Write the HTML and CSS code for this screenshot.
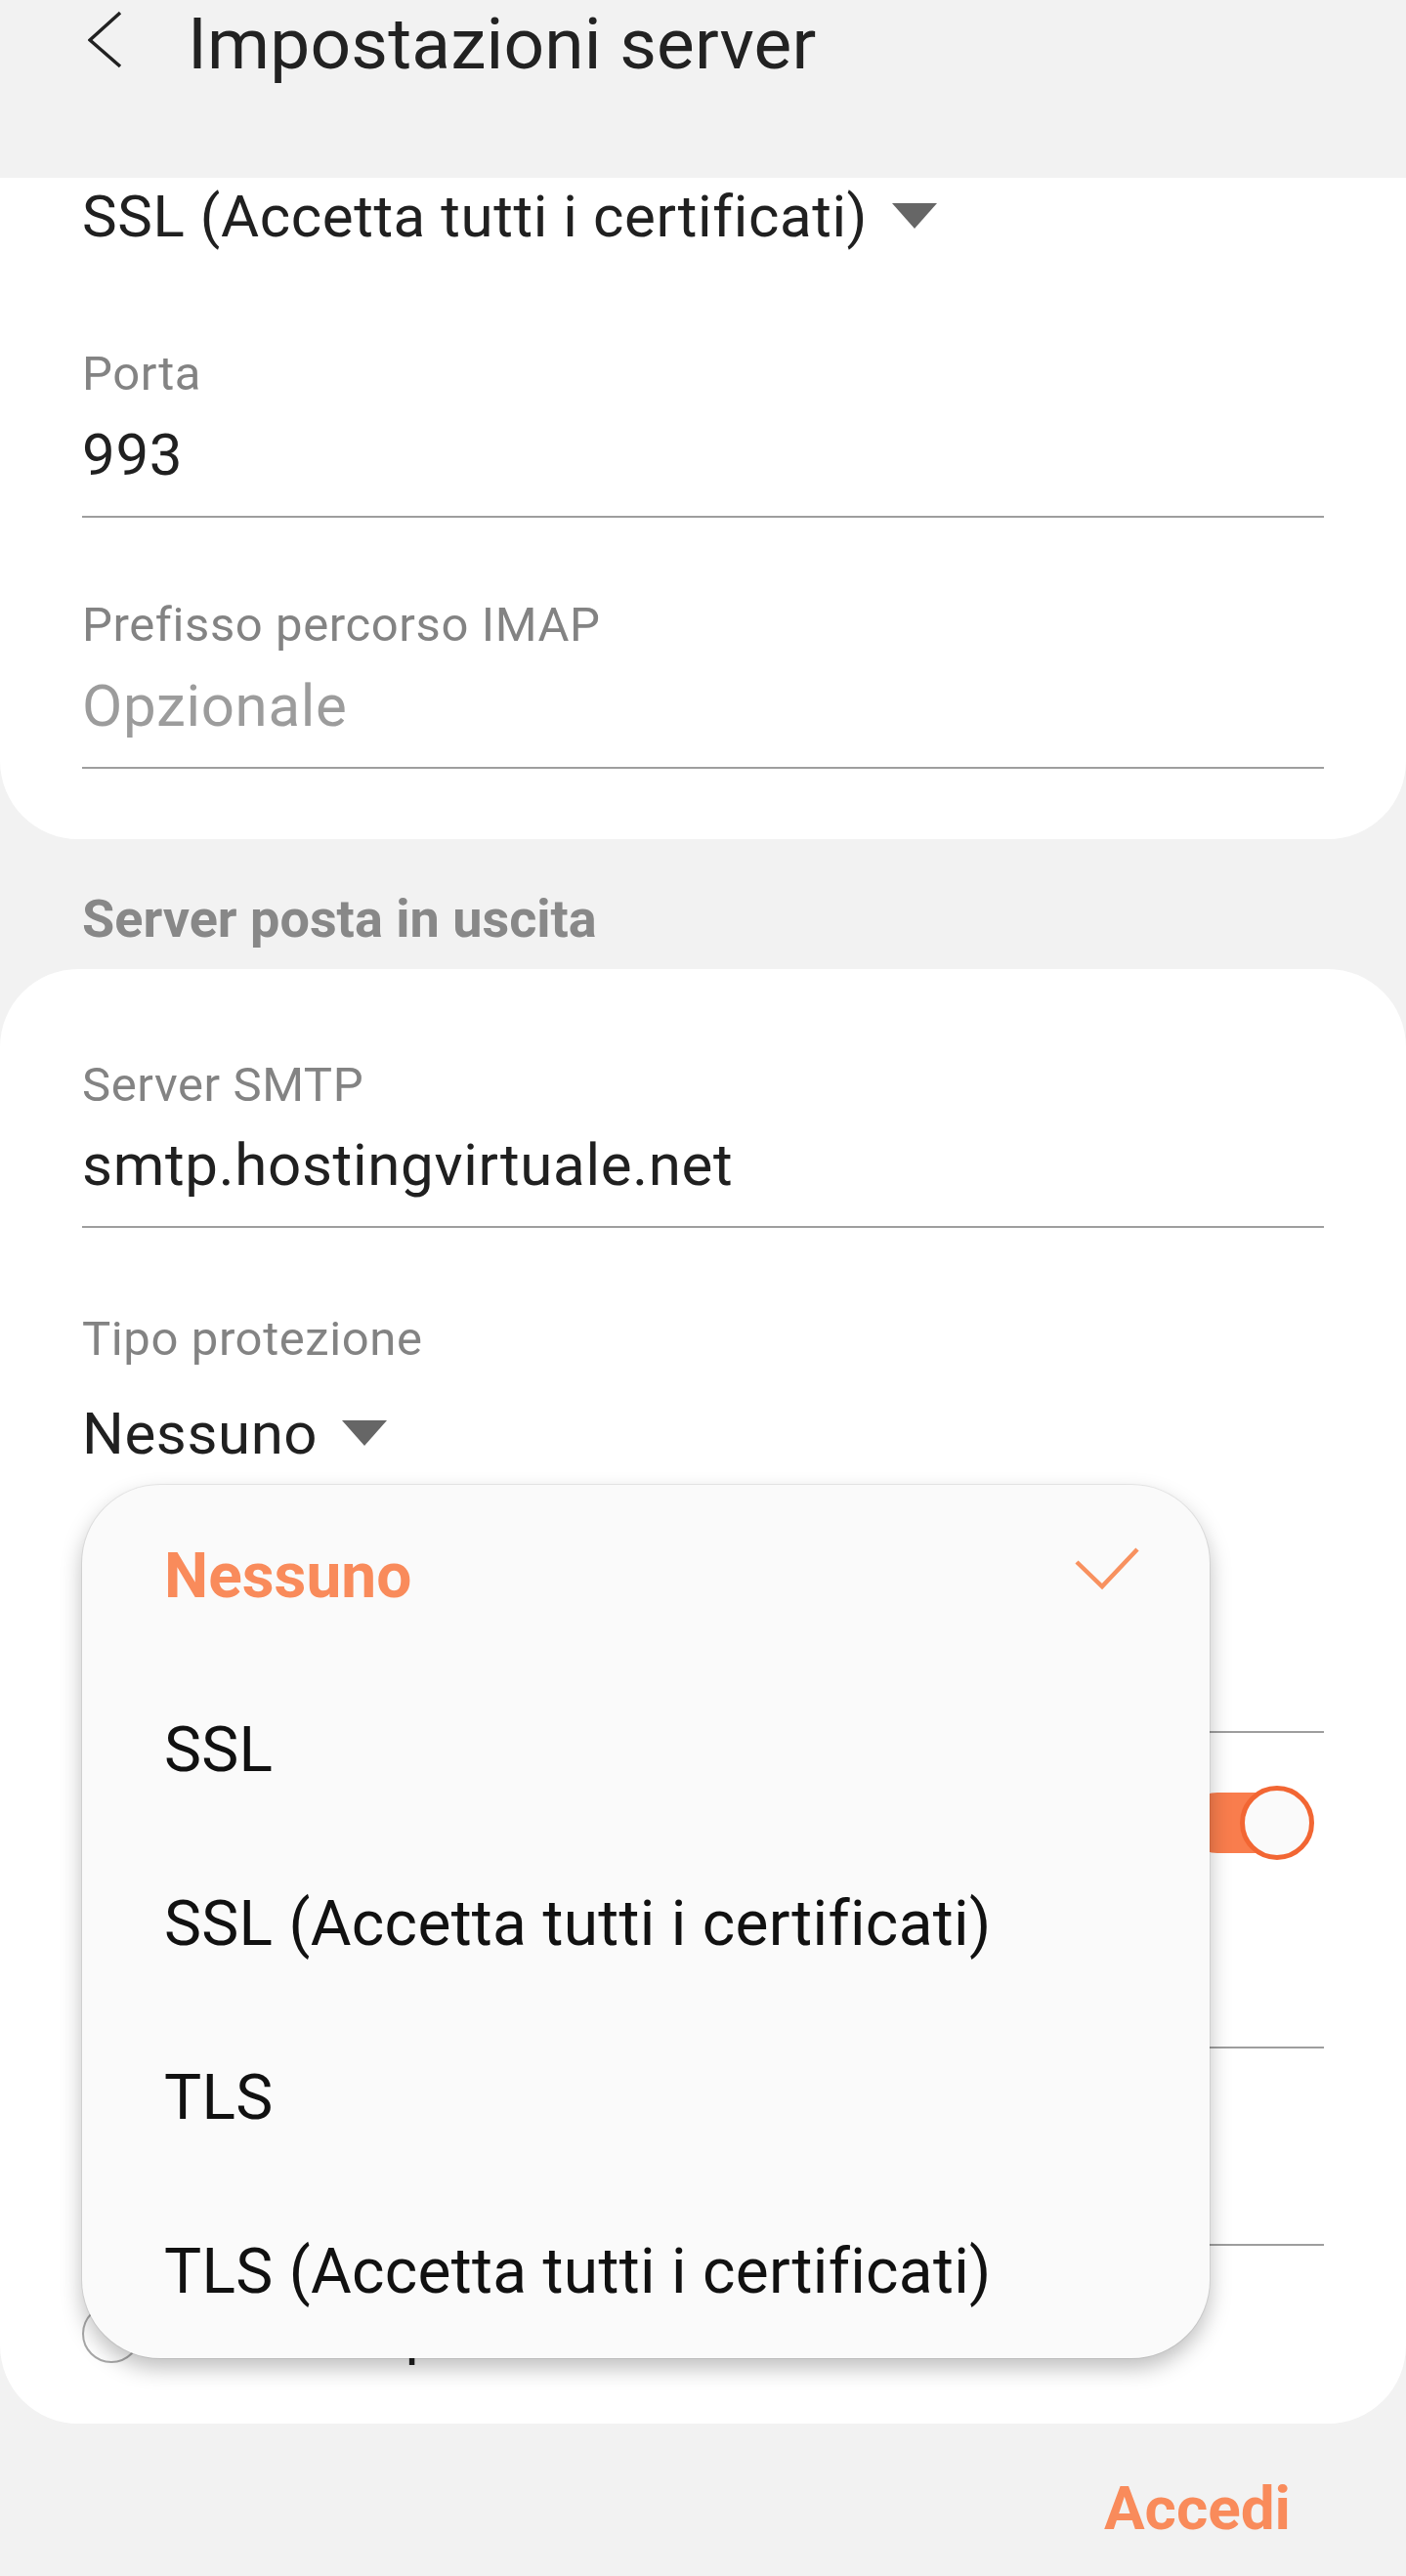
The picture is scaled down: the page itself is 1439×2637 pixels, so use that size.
FILE: index.html
```html
<!DOCTYPE html>
<html>
  <head>
    <meta charset="utf-8">
    <title>Impostazioni server</title>
    <link rel="stylesheet" href="styles.css">
  </head>
  <body>
    <div class="header">
      <svg class="back" width="36" height="60" viewBox="0 0 36 60">
        <polyline points="33,2 2,30 33,57" fill="none" stroke="#222" stroke-width="3.5" stroke-linejoin="miter"/>
      </svg>
      <h1 class="title">Impostazioni server</h1>
    </div>

    <div class="card card-in">
      <div class="select">SSL (Accetta tutti i certificati)<svg class="arrow" width="46" height="26" viewBox="0 0 46 26"><polygon points="0,0 46,0 23,26" fill="#666"/></svg></div>
      <div class="field f-first">
        <div class="label">Porta</div>
        <div class="value">993</div>
      </div>
      <div class="field f-imap">
        <div class="label">Prefisso percorso IMAP</div>
        <div class="value hint">Opzionale</div>
      </div>
    </div>

    <div class="section">Server posta in uscita</div>

    <div class="card card-out">
      <div class="field">
        <div class="label">Server SMTP</div>
        <div class="value">smtp.hostingvirtuale.net</div>
      </div>
      <div class="f-type">
        <div class="label">Tipo protezione</div>
        <div class="select sel-type">Nessuno<svg class="arrow" width="46" height="26" viewBox="0 0 46 26"><polygon points="0,0 46,0 23,26" fill="#666"/></svg></div>
      </div>
      <!-- rows below are covered by the popup -->
      <div class="field f-port">
        <div class="label"></div>
        <div class="value"></div>
      </div>
      <div class="toggle-row">
        <span class="value"></span>
        <div class="toggle">
          <div class="track"></div>
          <div class="thumb"></div>
        </div>
      </div>
      <div class="field f-user">
        <div class="label"></div>
        <div class="value"></div>
      </div>
      <div class="field f-pass">
        <div class="label"></div>
        <div class="value"></div>
      </div>
      <div class="check-row">
        <span class="radio"></span>
        <span class="value">Mostra password</span>
      </div>

      <div class="popup">
        <div class="item on">Nessuno<svg class="tick" width="72" height="50" viewBox="0 0 72 50"><polyline points="6,15 32,40 68,2" fill="none" stroke="#f8915f" stroke-width="4.5"/></svg></div>
        <div class="item">SSL</div>
        <div class="item">SSL (Accetta tutti i certificati)</div>
        <div class="item">TLS</div>
        <div class="item">TLS (Accetta tutti i certificati)</div>
      </div>
    </div>

    <div class="footer"><span class="accedi">Accedi</span></div>
  </body>
</html>
```

FILE: styles.css
```css
*{
  margin:0;
  padding:0;
  box-sizing:border-box;
}
body{
  background:#f2f2f2;
  font-family:Roboto, "Noto Sans", sans-serif;
  color:#202020;
  padding-bottom:27px;
}
.header{
  height:182px;
  display:flex;
  align-items:flex-start;
  padding-left:90px;
}
.back{
  margin-top:11px;
}
.title{
  font-size:73px;
  line-height:90px;
  font-weight:400;
  color:#222;
  margin-left:66px;
  letter-spacing:0.2px;
}
.card{
  background:#fff;
  padding:0 84px;
}
.card-in{
  border-radius:0 0 80px 80px;
  padding-bottom:72px;
}
.card-out{
  position:relative;
  border-radius:80px;
  margin-top:21px;
  padding-top:89px;
  padding-bottom:52px;
}
.select{
  font-size:60px;
  line-height:80px;
  height:80px;
  color:#202020;
  letter-spacing:0.6px;
  white-space:nowrap;
}
.arrow{
  margin-left:25px;
  vertical-align:8px;
}
.label{
  font-size:49px;
  line-height:60px;
  height:60px;
  color:#838383;
  letter-spacing:0.6px;
}
.value{
  font-size:60px;
  line-height:80px;
  color:#202020;
  letter-spacing:0.7px;
}
.hint{
  color:#9c9c9c;
}
.field .value{
  height:104px;
  margin-top:12px;
  padding-bottom:22px;
  border-bottom:2px solid #9e9e9e;
}
.f-first{
  margin-top:91px;
}
.f-first .value{
  margin-top:13px;
}
.f-imap{
  margin-top:80px;
}
.f-imap .value{
  margin-top:13px;
}
.section{
  margin-top:52px;
  padding-left:84px;
  font-size:54px;
  line-height:60px;
  font-weight:700;
  color:#888;
}
.f-type{
  margin-top:84px;
}
.sel-type{
  margin-top:27px;
}
.f-port{
  margin-top:90px;
}
.toggle-row{
  margin-top:42px;
  height:100px;
  display:flex;
  align-items:center;
  justify-content:space-between;
}
.toggle{
  position:relative;
  width:130px;
  height:76px;
  margin-right:10px;
}
.track{
  position:absolute;
  left:0;
  top:7px;
  width:110px;
  height:62px;
  border-radius:31px;
  background:#f97d4d;
}
.thumb{
  position:absolute;
  right:0;
  top:0;
  width:76px;
  height:76px;
  border-radius:50%;
  background:#fafafa;
  border:5px solid #f26633;
}
.f-user{
  margin-top:5px;
}
.f-pass{
  margin-top:26px;
}
.check-row{
  margin-top:50px;
  display:flex;
  align-items:center;
  height:80px;
}
.radio{
  width:60px;
  height:60px;
  border-radius:50%;
  border:2px solid #a8a8a8;
}
.check-row .value{
  margin-left:62px;
}
.popup{
  position:absolute;
  left:84px;
  top:528px;
  width:1154px;
  height:894px;
  padding-top:4px;
  border-radius:80px;
  background:#fafafa;
  box-shadow:0 0 0 1px rgba(0,0,0,0.07), 0 10px 22px rgba(0,0,0,0.26);
}
.item{
  height:178px;
  display:flex;
  align-items:center;
  justify-content:space-between;
  padding:0 70px 0 84px;
  font-size:64px;
  color:#111;
  letter-spacing:0.3px;
  white-space:nowrap;
}
.item.on{
  color:#f98b5b;
  font-weight:700;
  letter-spacing:0;
}
.tick{
  margin-top:-8px;
}
.footer{
  margin-top:47px;
  display:flex;
  justify-content:flex-end;
  padding-right:118px;
}
.accedi{
  font-size:62px;
  line-height:80px;
  font-weight:700;
  color:#f98b5b;
}
```
